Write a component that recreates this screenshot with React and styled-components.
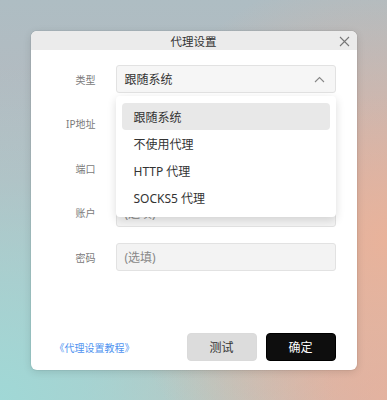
import styled, { createGlobalStyle } from "styled-components";

const Global = createGlobalStyle`
  html, body {
    margin: 0;
    padding: 0;
  }
  body {
    font-family: "Noto Sans", "Noto Sans CJK SC", sans-serif;
  }
`;

const Desktop = styled.div`
  width: 387px;
  height: 400px;
  display: flex;
  justify-content: center;
  align-items: flex-start;
  padding-top: 31px;
  box-sizing: border-box;
  background:
    radial-gradient(circle at 100% 60%, rgba(236, 178, 152, 0.9) 0%, rgba(236, 178, 152, 0) 60%),
    radial-gradient(circle at 0% 100%, rgba(160, 216, 214, 1) 0%, rgba(160, 216, 214, 0) 60%),
    radial-gradient(circle at 100% 100%, rgba(222, 178, 164, 1) 0%, rgba(222, 178, 164, 0) 55%),
    linear-gradient(180deg, #aebdc3 0%, #b8b9bf 45%, #b6c6c6 100%);
`;

const Dialog = styled.div`
  width: 326px;
  height: 339px;
  background: #ffffff;
  border-radius: 6px;
  box-shadow: 0 2px 8px rgba(0, 0, 0, 0.12), 0 0 0 1px rgba(0, 0, 0, 0.04);
  display: flex;
  flex-direction: column;
`;

const TitleBar = styled.div`
  height: 19px;
  background: #ebebeb;
  border-radius: 6px 6px 0 0;
  position: relative;
  display: flex;
  align-items: center;
  justify-content: center;
  font-size: 11.5px;
  color: #333;
`;

const Close = styled.button`
  position: absolute;
  right: 4px;
  top: 2px;
  width: 16px;
  height: 16px;
  padding: 0;
  border: none;
  background: transparent;
  display: flex;
  align-items: center;
  justify-content: center;
`;

const Form = styled.div`
  display: grid;
  grid-template-columns: 65px 1fr;
  column-gap: 20px;
  row-gap: 16.5px;
  padding: 15px 21px 0 0;
  align-items: center;
`;

const Label = styled.div`
  text-align: right;
  font-size: 10px;
  color: #7a7a7a;
`;

const Field = styled.div`
  height: 28px;
  box-sizing: border-box;
  border: 1px solid #e2e2e2;
  border-radius: 3px;
  background: ${(p) => (p.$select ? "#f6f6f6" : "#f3f3f3")};
  display: flex;
  align-items: center;
  justify-content: space-between;
  padding: 0 10px 0 8px;
  font-size: 12px;
  color: ${(p) => (p.$placeholder ? "#888" : "#333")};
  position: relative;
`;

const Menu = styled.div`
  position: absolute;
  left: -1px;
  right: -1px;
  top: 30px;
  background: #fff;
  border-radius: 4px;
  box-shadow: 0 3px 10px rgba(0, 0, 0, 0.14);
  padding: 7px 6px 6px;
  z-index: 5;
`;

const Item = styled.div`
  height: 27px;
  display: flex;
  align-items: center;
  padding-left: 12px;
  border-radius: 4px;
  font-size: 12px;
  color: #333;
  background: ${(p) => (p.$active ? "#e8e8e8" : "transparent")};
`;

const Footer = styled.div`
  margin-top: auto;
  display: flex;
  align-items: center;
  padding: 0 21px 9px 24px;
`;

const Link = styled.a`
  font-size: 10px;
  color: #4f93f0;
  text-decoration: none;
  margin-right: auto;
`;

const Button = styled.button`
  width: 70px;
  height: 28px;
  border-radius: 4px;
  border: 1px solid ${(p) => (p.$primary ? "#000" : "#dadada")};
  background: ${(p) => (p.$primary ? "#0e0e0e" : "#dcdcdc")};
  color: ${(p) => (p.$primary ? "#fff" : "#333")};
  font-family: inherit;
  font-size: 12px;
  margin-left: 9px;
  padding: 0;
`;

const options = ["跟随系统", "不使用代理", "HTTP 代理", "SOCKS5 代理"];

export default function App() {
  return (
    <Desktop>
      <Global />
      <Dialog>
        <TitleBar>
          代理设置
          <Close aria-label="close">
            <svg width="11" height="11" viewBox="0 0 11 11">
              <path d="M1 1L10 10M10 1L1 10" stroke="#777" strokeWidth="1.1" fill="none" />
            </svg>
          </Close>
        </TitleBar>
        <Form>
          <Label>类型</Label>
          <Field $select>
            跟随系统
            <svg width="11" height="7" viewBox="0 0 11 7">
              <path d="M1 6L5.5 1.5L10 6" stroke="#888" strokeWidth="1.1" fill="none" />
            </svg>
            <Menu>
              {options.map((o, i) => (
                <Item key={o} $active={i === 0}>
                  {o}
                </Item>
              ))}
            </Menu>
          </Field>
          <Label>IP地址</Label>
          <Field $placeholder />
          <Label>端口</Label>
          <Field $placeholder />
          <Label>账户</Label>
          <Field $placeholder>(选填)</Field>
          <Label>密码</Label>
          <Field $placeholder>(选填)</Field>
        </Form>
        <Footer>
          <Link href="#">《代理设置教程》</Link>
          <Button>测试</Button>
          <Button $primary>确定</Button>
        </Footer>
      </Dialog>
    </Desktop>
  );
}
